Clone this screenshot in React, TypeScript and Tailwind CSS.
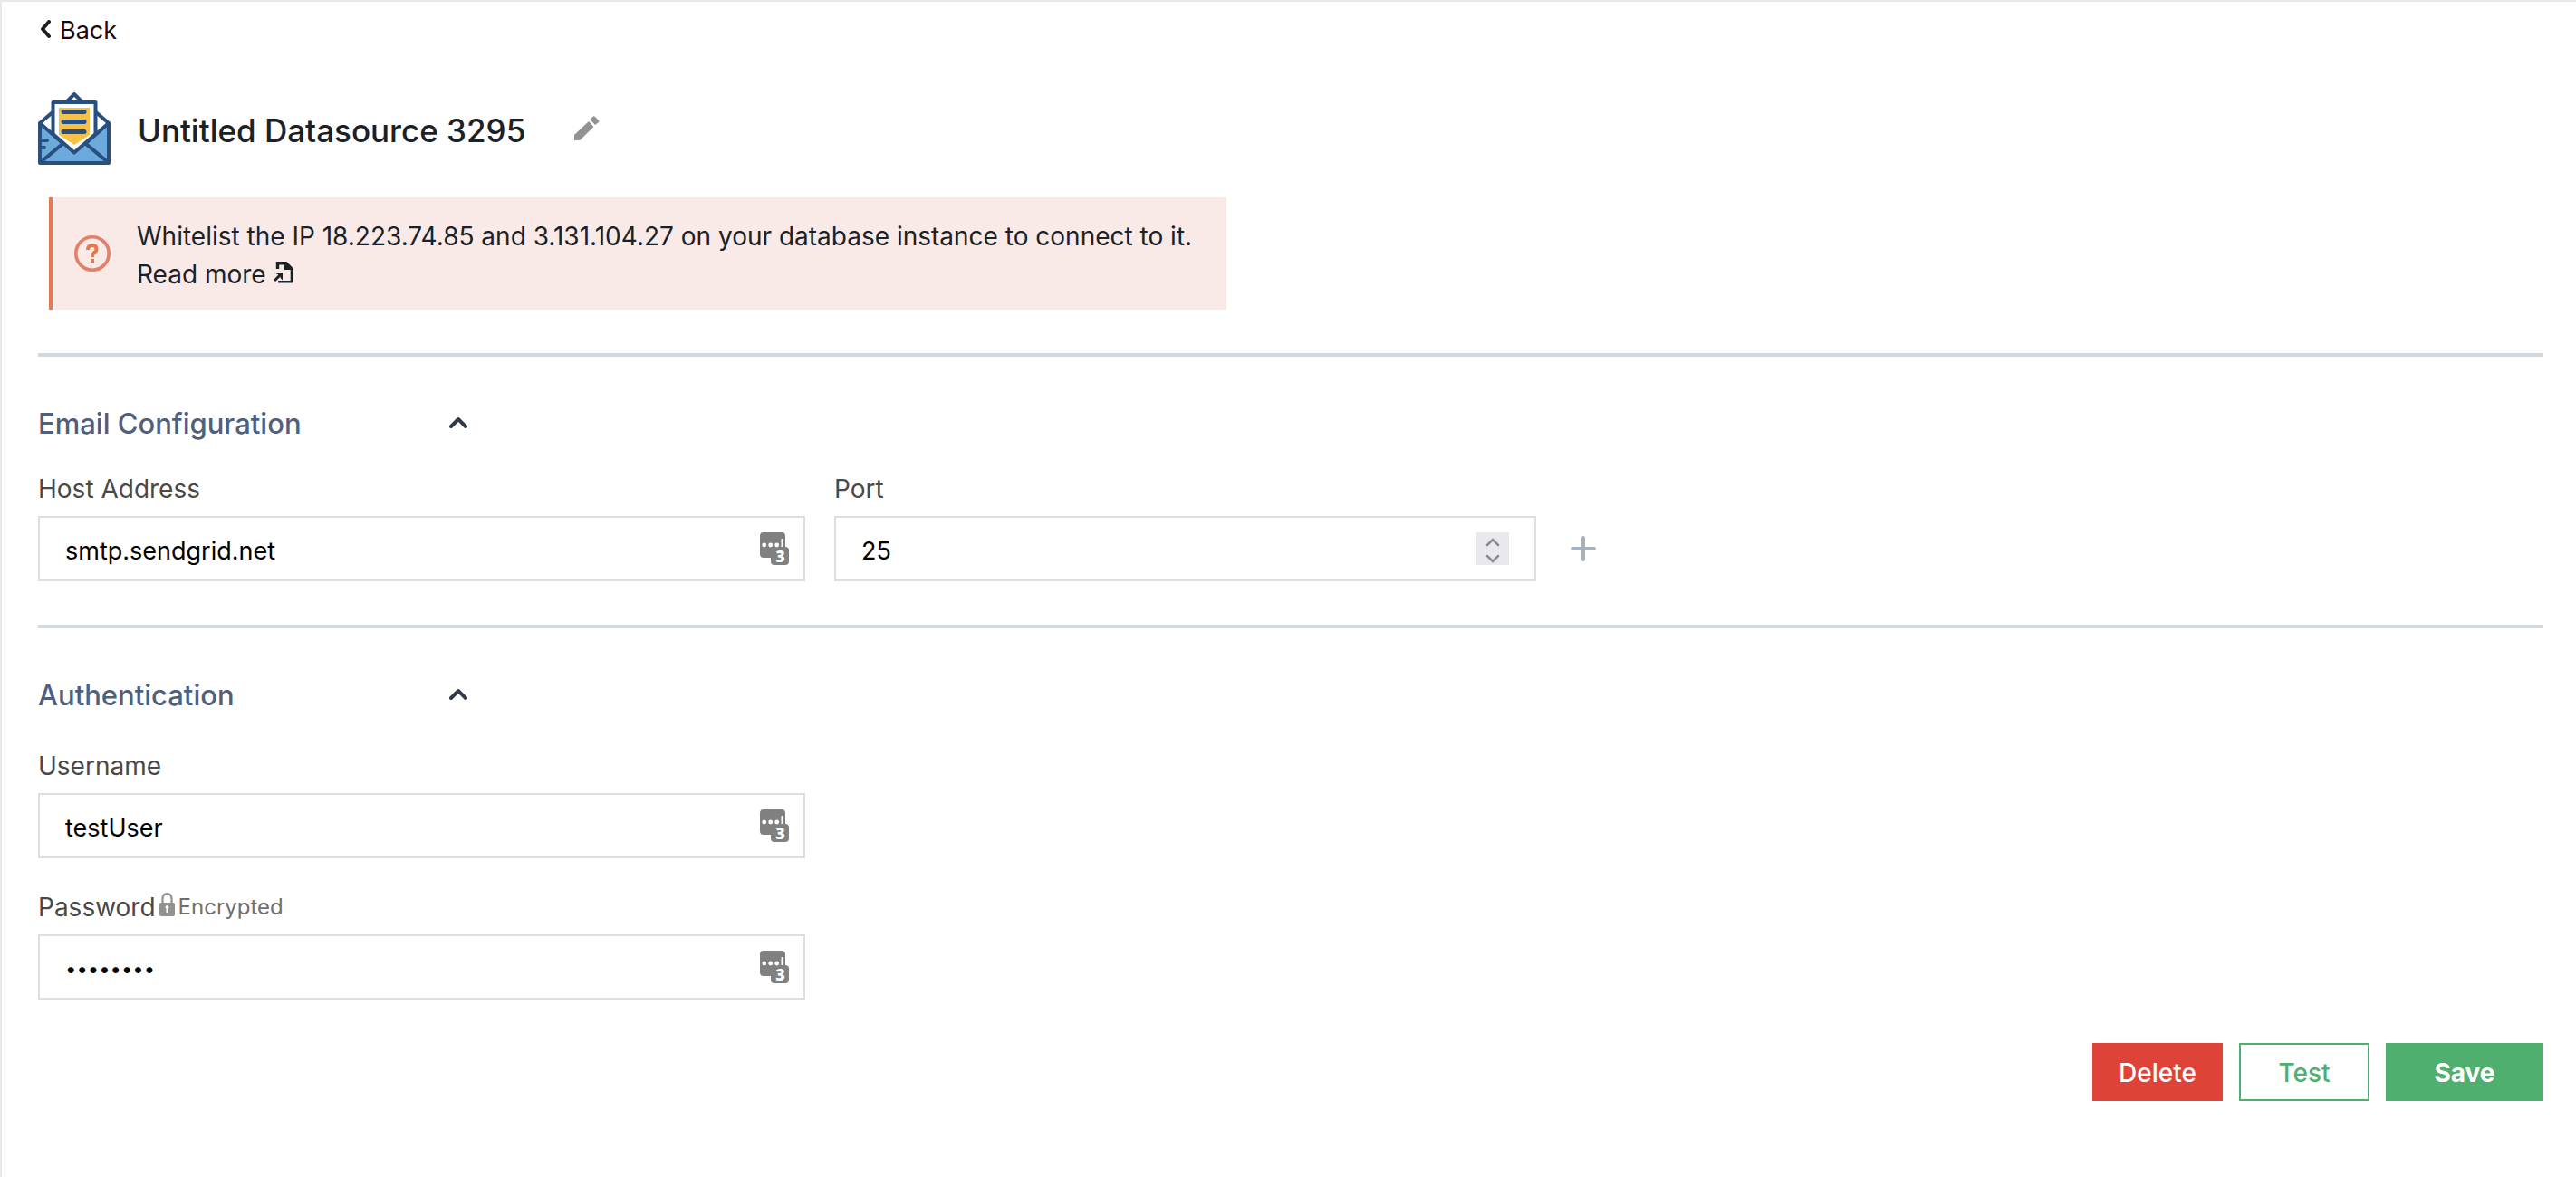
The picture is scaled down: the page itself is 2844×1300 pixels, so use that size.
import { useState } from "react";
import type { ReactNode } from "react";

function EnvelopeLogo() {
  return (
    <svg viewBox="0 0 80 80" className="size-20 shrink-0" aria-hidden="true">
      <path d="M2 34 L26 57 L40 67 L54 57 L78 34 V78 H2 Z" fill="#6caadb" />
      <g fill="none" stroke="#275080" strokeWidth="4" strokeLinejoin="round" strokeLinecap="round">
        <path d="M16 22 L2 34 V78 H78 V34 L64 22" />
        <path d="M32 10 L40 2 L48 10" />
        <path d="M2 34 L26 55 M78 34 L54 55 M3 77 L27 57 M77 77 L53 57" />
        <path d="M4 53 H10 M4 61 H7" />
        <path d="M16.5 11 H63.5 V46 L40 66.5 L16.5 46 Z" fill="#ffffff" />
      </g>
      <path d="M23 17 H57 V47 L40 58 L23 47 Z" fill="#f5c246" />
      <path d="M28 21.5 H51 M28 32.500 H51 M28 43.500 H51" stroke="#275080" strokeWidth="5" strokeLinecap="round" />
    </svg>
  );
}

function PasswordManagerIcon() {
  return (
    <svg viewBox="0 0 32 36" className="pointer-events-none absolute top-[18px] right-[18px] h-9 w-8 overflow-visible" aria-hidden="true">
      <path d="M4 0H24a4 4 0 0 1 4 4V16H28a4 4 0 0 1 4 4V32a4 4 0 0 1-4 4H16a4 4 0 0 1-4-4V28H4a4 4 0 0 1-4-4V4a4 4 0 0 1 4-4Z" fill="#808080" />
      <g fill="#ffffff">
        <circle cx="4.700" cy="14" r="2.400" />
        <circle cx="11.700" cy="14" r="2.400" />
        <circle cx="18.700" cy="14" r="2.400" />
        <rect x="23.500" y="7" width="2.300" height="9" />
      </g>
      <text x="22.500" y="33" textAnchor="middle" fontSize="18" fontWeight="800" fontFamily="Open Sans, sans-serif" fill="#ffffff">3</text>
    </svg>
  );
}

function Section({ title, children }: { title: string; children: ReactNode }) {
  const [open, setOpen] = useState(true);
  return (
    <section className="border-t-4 border-[#d3d8dc] pt-[54px]">
      <button
        type="button"
        aria-expanded={open}
        onClick={() => setOpen(!open)}
        className="flex w-full max-w-[476px] items-center justify-between text-left"
      >
        <h2 className="text-[31px] leading-10 font-medium text-[#505f7c]">{title}</h2>
        <svg viewBox="0 0 24 16" className="h-4 w-6" fill="none" stroke="#303b49" strokeWidth="4" strokeLinecap="round" strokeLinejoin="round" aria-hidden="true">
          <path d="M4 11 L12 3 L20 11" />
        </svg>
      </button>
      {open && children}
    </section>
  );
}

function Field({ id, label, type, value, note }: { id: string; label: string; type: string; value: string; note?: ReactNode }) {
  const textSize = type === "password" ? "text-[22px]" : "text-[27px]";
  return (
    <div className="w-full max-w-[847px]">
      <div className="flex items-center">
        <label htmlFor={id} className="text-[28px] leading-9 text-[#4b4848]">{label}</label>
        {note}
      </div>
      <div className="relative mt-3">
        <input
          id={id}
          type={type}
          defaultValue={value}
          className={`block h-[72px] w-full border-2 border-[#dedede] bg-white px-7 pt-1 text-black outline-none ${textSize}`}
        />
        <PasswordManagerIcon />
      </div>
    </div>
  );
}

function PortField() {
  const [port, setPort] = useState(25);
  return (
    <div className="w-full max-w-[775px]">
      <label htmlFor="port" className="block text-[28px] leading-9 text-[#4b4848]">Port</label>
      <div className="relative mt-3">
        <input
          id="port"
          type="number"
          value={port}
          onChange={(e) => setPort(Number(e.target.value))}
          className="block h-[72px] w-full border-2 border-[#dedede] bg-white px-7 pt-1 text-[27px] text-black outline-none [appearance:textfield]"
        />
        <div className="absolute top-[18px] right-[30px] flex size-9 flex-col bg-[#e9e8ed] text-[#8c8a9b]">
          <button type="button" aria-label="Increase port" onClick={() => setPort(port + 1)} className="flex h-[18px] items-center justify-center">
            <svg viewBox="0 0 16 10" className="mt-1 h-[10px] w-4" fill="none" stroke="currentColor" strokeWidth="2.500" strokeLinecap="round" strokeLinejoin="round" aria-hidden="true"><path d="M2 8 L8 2 L14 8" /></svg>
          </button>
          <button type="button" aria-label="Decrease port" onClick={() => setPort(port - 1)} className="flex h-[18px] items-center justify-center">
            <svg viewBox="0 0 16 10" className="mt-1 h-[10px] w-4" fill="none" stroke="currentColor" strokeWidth="2.500" strokeLinecap="round" strokeLinejoin="round" aria-hidden="true"><path d="M2 2 L8 8 L14 2" /></svg>
          </button>
        </div>
      </div>
    </div>
  );
}

export default function App() {
  return (
    <main className="min-h-screen border-t-2 border-l-2 border-[#e7e7ec] bg-white pr-9 pl-10 font-['Inter',sans-serif] text-[#1b2227]">
      <a href="#back" className="mt-3 flex h-10 w-fit items-center gap-2 text-[27px] text-[#1a0a0c]">
        <svg viewBox="0 0 16 24" className="h-6 w-4" fill="none" stroke="#1b2227" strokeWidth="4" strokeLinecap="round" strokeLinejoin="round" aria-hidden="true">
          <path d="M12 2 L5 10 L12 18" />
        </svg>
        Back
      </a>

      <header className="mt-12 flex items-center">
        <EnvelopeLogo />
        <h1 className="ml-[30px] pt-1 text-[35px] leading-[44px] font-medium">Untitled Datasource 3295</h1>
        <button type="button" aria-label="Edit name" className="ml-[54px]">
          <svg viewBox="0 0 28 28" className="size-7" fill="#929290" aria-hidden="true">
            <path d="M0 21 V27 H6 L21.500 12 L16 6 Z M17.500 4 L21 0.500 Q22 0 23 1 L27 5 Q28 6 27 7 L23 10 Z" />
          </svg>
        </button>
      </header>

      <aside className="mt-9 ml-3 flex w-full max-w-[1300px] items-center border-l-4 border-[#e07c50] bg-[#faeae7]">
        <svg viewBox="0 0 40 40" className="ml-6 size-10 shrink-0" fill="none" aria-hidden="true">
          <circle cx="20" cy="20" r="18.200" stroke="#e2806a" strokeWidth="3.600" />
          <path d="M15 16 Q15 11 20 11 Q24.500 11 24.500 15 Q24.500 17.500 22 19 Q20 20.500 20 24" stroke="#e07c50" strokeWidth="4" />
          <rect x="18" y="26" width="4" height="4" fill="#e07c50" />
        </svg>
        <p className="ml-[29px] pt-[22px] pb-[18px] text-[28px] leading-[42px]">
          Whitelist the IP 18.223.74.85 and 3.131.104.27 on your database instance to connect to it.
          <br />
          <a href="#read-more" className="inline-flex items-center gap-2">
            Read more
            <svg viewBox="0 0 22 24" className="mb-1 h-6 w-[22px]" fill="none" stroke="currentColor" aria-hidden="true">
              <path d="M4.500 8 V1.700 H14" strokeWidth="3.400" />
              <path d="M12 0 H14.500 L21 6.500 V9 H12 Z" fill="currentColor" stroke="none" />
              <path d="M20 8 V23 M5 22.300 H21" strokeWidth="2.600" />
              <path d="M1 21 L8 14" strokeWidth="3" />
              <path d="M1 12 H10 V20.500 L7.500 18 V15 L6 15 Z" fill="currentColor" stroke="none" />
            </svg>
          </a>
        </p>
      </aside>

      <form className="mt-12" onSubmit={(e) => e.preventDefault()}>
        <Section title="Email Configuration">
          <div className="mt-[34px] mb-12 flex gap-8">
            <Field id="host" label="Host Address" type="text" value="smtp.sendgrid.net" />
            <PortField />
            <button type="button" aria-label="Add host" className="mb-[22px] ml-1.5 self-end">
              <svg viewBox="0 0 28 28" className="size-7" stroke="#a5b2be" strokeWidth="4" strokeLinecap="round" aria-hidden="true">
                <path d="M14 2 V26 M2 14 H26" />
              </svg>
            </button>
          </div>
        </Section>
        <Section title="Authentication">
          <div className="mt-10 flex flex-col gap-9">
            <Field id="username" label="Username" type="text" value="testUser" />
            <Field
              id="password"
              label="Password"
              type="password"
              value="password"
              note={
                <span className="flex items-center gap-1 pl-1 text-2xl leading-9 text-[#716e6e]">
                  <svg viewBox="0 0 17 28" className="mb-1 h-7 w-[17px]" aria-hidden="true">
                    <path d="M3.500 13 V7 Q3.500 1.200 8.500 1.200 Q13.500 1.200 13.500 7 V13" fill="none" stroke="#929290" strokeWidth="2.200" />
                    <rect y="11" width="17" height="15" rx="2" fill="#929290" />
                    <path d="M8.500 14 a2 2 0 0 1 1 3.700 V22 h-2 v-4.300 a2 2 0 0 1 1-3.700" fill="#ffffff" />
                  </svg>
                  Encrypted
                </span>
              }
            />
          </div>
        </Section>
        <div className="mt-12 flex justify-end gap-[18px] text-[28px] font-medium">
          <button type="button" className="h-16 w-36 bg-[#df4239] pt-0.5 text-white">Delete</button>
          <button type="button" className="h-16 w-36 border-2 border-[#50af6e] bg-white pt-0.5 text-[#50af6e]">Test</button>
          <button type="submit" className="h-16 w-[174px] bg-[#50af6e] pt-0.5 font-bold text-white">Save</button>
        </div>
      </form>
    </main>
  );
}
